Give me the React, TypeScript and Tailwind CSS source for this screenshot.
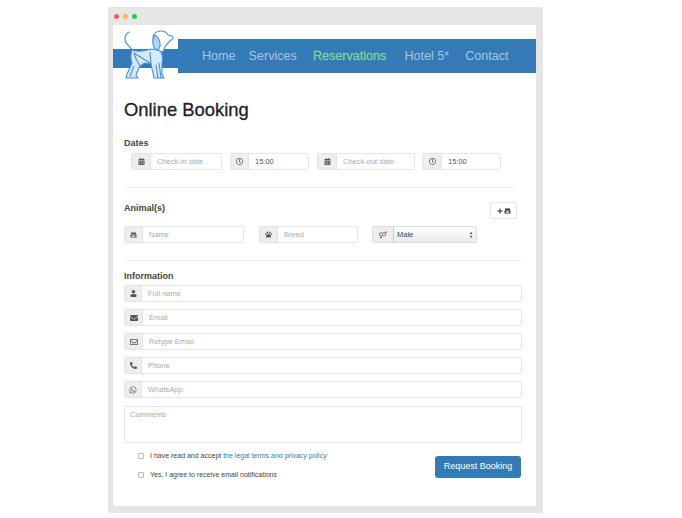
import type { ReactNode } from "react";
import { FaCalendarAlt, FaRegClock, FaPaw, FaUser, FaEnvelope, FaRegEnvelope, FaPhone, FaWhatsapp, FaVenusMars, FaPlus } from "react-icons/fa";

function Crate({ className }: { className?: string }) {
  return (
    <svg viewBox="0 0 16 14" className={className} fill="currentColor">
      <path d="M3 1h10a1 1 0 0 1 1 1v3H2V2a1 1 0 0 1 1-1z" />
      <path d="M1 6h14v7H1zM4 8v3h8V8z" fillRule="evenodd" />
    </svg>
  );
}

function Dog() {
  return (
    <svg viewBox="0 0 52 50" className="absolute left-[10px] top-[5px] h-[50px] w-[52px]" fill="none" stroke="#4a90d9" strokeWidth="1.1" strokeLinejoin="round" strokeLinecap="round">
      <path d="M6 2C1 5 1 11 4 14c2 2 4 4 5 6" />
      <path d="M9 20C7 26 8 30 9 33L4 44 3 48H15L13 45 17 36 22 33 28 34 31 48H41L39 44 39 33C41 27 38 21 36 20L28 19C22 21 14 22 9 20z" fill="#d6e8fc" />
      <path d="M17 36C14 32 12 27 11 23L27 33" />
      <path d="M7 46 11 36M33 35 35 48M36 33 38 48M28 34 27 22" />
      <path d="M30 8C30 3 34 1 38 1 42 1 44 3 45 5L49 6C51 7 50 10 48 10L44 14C42 16 41 20 40 22L34 20C31 17 30 12 30 8z" fill="#ffffff" />
      <path d="M32 5C29 8 29 15 32 19 35 21 38 18 37 13 36 9 34 6 32 5z" fill="#b5d4f6" />
    </svg>
  );
}

function Field({ icon, placeholder, value, addon, className, textClass = "pl-[6px]" }: { icon: ReactNode; placeholder?: string; value?: string; addon: string; className: string; textClass?: string }) {
  return (
    <div className={`flex h-[17px] rounded-[2px] border border-[#e4e4e4] ${className}`}>
      <span className={`flex shrink-0 items-center justify-center border-r border-[#e4e4e4] bg-[#eeeeee] text-[#555555] ${addon}`}>{icon}</span>
      <span className={`flex flex-1 items-center text-[7.5px] ${textClass} ${value ? "text-[#555555]" : "text-[#aaaaaa]"}`}>{value ?? placeholder}</span>
    </div>
  );
}

const infoRows = [
  { icon: <FaUser className="size-[7px]" />, placeholder: "Full name", addon: "w-[17px]" },
  { icon: <FaEnvelope className="size-[8px]" />, placeholder: "Email", addon: "w-[18px]" },
  { icon: <FaRegEnvelope className="size-[8px]" />, placeholder: "Retype Email", addon: "w-[18px]" },
  { icon: <FaPhone className="size-[7px] -scale-x-100" />, placeholder: "Phone", addon: "w-[17px]" },
  { icon: <FaWhatsapp className="size-[8px]" />, placeholder: "WhatsApp", addon: "w-[17px]" },
];

export default function App() {
  return (
    <div className="min-h-[518px] bg-white pt-[7px] font-['Liberation_Sans',Arial,sans-serif] text-[#333333]">
      <div className="ml-[108px] w-[435px] rounded-t-[2px] bg-[#e6e6e6] px-[5px] pb-[7px]">
        <div className="flex h-[18px] items-center gap-[4px] pl-[1px]">
          <span className="size-[5px] rounded-full bg-[#f65f57]" />
          <span className="size-[5px] rounded-full bg-[#fbbd2e]" />
          <span className="size-[5px] rounded-full bg-[#2ac941]" />
        </div>
        <div className="h-[481px] w-[423px] bg-white">
          <header className="relative flex h-[48px] items-end">
            <div className="mb-[5px] h-[19px] w-[65px] bg-[#337ab7]" />
            <nav className="flex h-[34px] flex-1 items-center pl-[24px] bg-[#337ab7] text-[12.6px] text-[#a3c6e4]">
              <span>Home</span>
              <span className="ml-[13px]">Services</span>
              <span className="ml-[16px] font-medium text-[#7fd39b] [-webkit-text-stroke:0.3px_#7fd39b]">Reservations</span>
              <span className="ml-[18px]">Hotel 5*</span>
              <span className="ml-[16px]">Contact</span>
            </nav>
            <Dog />
          </header>

          <main className="pl-[11px] pr-[14px]">
            <h1 className="mt-[26px] text-[18.4px] leading-[22px] font-medium text-[#222222] [-webkit-text-stroke:0.3px_#222222]">Online Booking</h1>

            <h2 className="mt-[16px] text-[9px] leading-[12px] font-bold text-[#444444]">Dates</h2>
            <div className="mt-[4px] ml-[7px] flex">
              <Field icon={<FaCalendarAlt className="size-[7px]" />} placeholder="Check-in date" addon="w-[19px]" className="w-[91px]" />
              <Field icon={<FaRegClock className="size-[7px]" />} value="15:00" addon="w-[18px]" className="ml-[8px] w-[79px]" />
              <Field icon={<FaCalendarAlt className="size-[7px]" />} placeholder="Check-out date" addon="w-[19px]" className="ml-[8px] w-[98px]" />
              <Field icon={<FaRegClock className="size-[7px]" />} value="15:00" addon="w-[19px]" className="ml-[7px] w-[79px]" />
            </div>

            <div className="mt-[17px] mr-[6px] h-px bg-[#f1f1f1]" />

            <div className="mt-[14px] mr-[5px] flex items-start justify-between">
              <h2 className="text-[9px] leading-[12px] font-bold text-[#444444]">Animal(s)</h2>
              <button className="flex h-[17px] w-[27px] items-center justify-center gap-[1px] rounded-[2px] border border-[#e4e4e4] text-[#333333]">
                <FaPlus className="size-[6px]" />
                <Crate className="h-[6px] w-[7px]" />
              </button>
            </div>
            <div className="mt-[7px] flex">
              <Field icon={<Crate className="h-[6px] w-[7px]" />} placeholder="Name" addon="w-[18px]" className="w-[120px]" />
              <Field icon={<FaPaw className="size-[7px]" />} placeholder="Breed" addon="w-[18px]" className="ml-[15px] w-[99px]" />
              <div className="ml-[14px] flex h-[17px] w-[105px] rounded-[2px] border border-[#dddddd]">
                <span className="flex w-[20px] items-center justify-center bg-[#eeeeee] text-[#777777]">
                  <FaVenusMars className="size-[8px]" />
                </span>
                <span className="flex flex-1 items-center justify-between rounded-r-[2px] border-l border-[#cccccc] bg-gradient-to-b from-[#ffffff] to-[#e9e9e9] px-[3px] text-[7.5px] text-[#444444]">
                  Male
                  <span className="flex flex-col text-[4px] leading-[4px]">
                    <span>▲</span>
                    <span>▼</span>
                  </span>
                </span>
              </div>
            </div>

            <div className="mt-[17px] h-px bg-[#f1f1f1]" />

            <h2 className="mt-[9px] text-[9px] leading-[12px] font-bold text-[#444444]">Information</h2>
            <div className="mt-[3px] flex flex-col gap-[7px]">
              {infoRows.map((row) => (
                <Field key={row.placeholder} icon={row.icon} placeholder={row.placeholder} addon={row.addon} className="w-[398px]" />
              ))}
            </div>
            <div className="mt-[8px] h-[37px] w-[398px] rounded-[2px] border border-[#e4e4e4] px-[5px] py-[2px] text-[7.5px] text-[#aaaaaa]">Comments</div>

            <div className="flex w-[397px] items-start justify-between pl-[14px]">
              <div className="mt-[9px] flex flex-col gap-[11px] text-[7px] leading-[8px] text-[#444444]">
                <label className="flex items-center gap-[6px]">
                  <span className="size-[6px] rounded-[1px] border border-[#bbbbbb]" />
                  <span>I have read and accept <span className="text-[#337ab7]">the legal terms and privacy policy</span></span>
                </label>
                <label className="flex items-center gap-[6px]">
                  <span className="size-[6px] rounded-[1px] border border-[#bbbbbb]" />
                  <span>Yes, I agree to receive email notifications</span>
                </label>
              </div>
              <button className="mt-[13px] h-[22px] w-[86px] rounded-[3px] bg-[#337ab7] text-[9px] font-medium text-white">Request Booking</button>
            </div>
          </main>
        </div>
      </div>
    </div>
  );
}
